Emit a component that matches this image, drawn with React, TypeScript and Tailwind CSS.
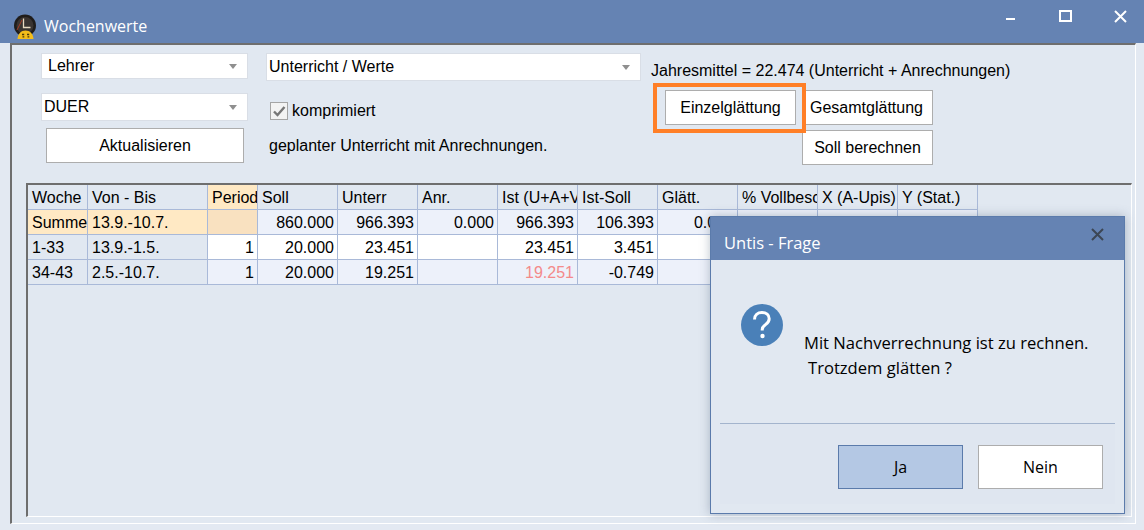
import React from 'react';

const sans = "font-['Liberation_Sans',Arial,sans-serif]";
const ui = "font-['Open_Sans','Noto_Sans',sans-serif]";
const gridCols = 'grid-cols-[60px_120px_50px_80px_80px_80px_80px_80px_80px_80px_80px_80px]';

const headers = ['Woche', 'Von - Bis', 'Periode', 'Soll', 'Unterr', 'Anr.', 'Ist (U+A+V', 'Ist-Soll', 'Glätt.', '% Vollbesch', 'X (A-Upis)', 'Y (Stat.)'];

const rows = [
  { cells: ['Summe', '13.9.-10.7.', '', '860.000', '966.393', '0.000', '966.393', '106.393', '0.000', '', '', ''], bg: 'bg-[#edf1fa]', first: 'bg-[#ffe9c4]', period: 'bg-[#f9e1c0]' },
  { cells: ['1-33', '13.9.-1.5.', '1', '20.000', '23.451', '', '23.451', '3.451', '', '', '', ''], bg: 'bg-white', first: 'bg-[#e1e8f1]', period: 'bg-white' },
  { cells: ['34-43', '2.5.-10.7.', '1', '20.000', '19.251', '', '19.251', '-0.749', '', '', '', ''], bg: 'bg-[#edf1fa]', first: 'bg-[#e1e8f1]', period: 'bg-[#edf1fa]' },
];

const Select = ({ label, className, textClass }: { label: string; className: string; textClass: string }) => (
  <div className={`flex items-center justify-between bg-white border border-[#d9dee6] text-[16px] text-black ${className}`}>
    <span className={textClass}>{label}</span>
    <svg width="8" height="5" viewBox="0 0 8 5" className="mr-[10px]">
      <path d="M0 0h8L4 5z" fill="#8f8f8f" />
    </svg>
  </div>
);

const Btn = ({ label, className }: { label: string; className: string }) => (
  <button className={`bg-white border border-[#adadad] text-[16px] text-black flex items-center justify-center ${className}`}>
    {label}
  </button>
);

const Logo = () => (
  <svg width="24" height="26" viewBox="0 0 24 26" className="shrink-0 mt-[10px]">
    <circle cx="12" cy="11.500" r="11" fill="#1f1c1a" />
    <circle cx="12" cy="11.500" r="8.500" fill="#3a3431" />
    <path d="M10.500 4.500v9h7" stroke="#e8d9c0" strokeWidth="1.300" fill="none" />
    <path d="M4 16l5-10" stroke="#a33c26" strokeWidth="1" />
    <path d="M4.500 25c.5-5.500 3.500-8.500 8-8.500s7.500 3 8 8.500z" fill="#f3bd1a" />
    <path d="M9 20.500h2.200M14 20.500h2.200M9.500 22.800h1.800M14.500 22.800h1.800" stroke="#4a3a08" strokeWidth="1.300" />
  </svg>
);

export default function App() {
  return (
    <div className={`relative w-[1144px] h-[530px] overflow-hidden bg-[#e3e9f2] ${sans}`}>
      {/* Title bar */}
      <div className="h-[43px] bg-[#6583b3] flex items-center pl-[13px] text-white">
        <Logo />
        <span className={`ml-[7px] mt-[9px] text-[16px] ${ui}`}>Wochenwerte</span>
        <div className="ml-auto flex items-start self-start">
          <div className="w-[9px] h-[2px] bg-white mt-[18px]" />
          <div className="w-[13px] h-[12px] border-2 border-white ml-[44px] mt-[10px]" />
          <svg width="13" height="13" viewBox="0 0 13 13" className="ml-[42px] mr-[17px] mt-[10px]">
            <path d="M1 1l11 11M12 1L1 12" stroke="white" strokeWidth="2" />
          </svg>
        </div>
      </div>

      {/* Main panel */}
      <div className="ml-[10px] w-[1126px] h-[481px] border-l-2 border-t-2 border-l-[#6e6e6e] border-t-[#6e6e6e] border-b border-r border-b-white border-r-white bg-[#e1e8f1] flex flex-col">
        <div className="flex h-[138px] pt-[8px] pl-[29px]">
          <div className="w-[207px] flex flex-col">
            <Select label="Lehrer" className="h-[26px]" textClass="ml-[6px]" />
            <Select label="DUER" className="h-[28px] mt-[14px]" textClass="ml-[2px]" />
            <Btn label="Aktualisieren" className="w-[198px] h-[35px] ml-[5px] mt-[7px]" />
          </div>
          <div className="w-[375px] ml-[18px] flex flex-col text-[16px] text-black">
            <Select label="Unterricht / Werte" className="h-[28px]" textClass="ml-[2px]" />
            <div className="flex items-center mt-[21px] ml-[4px] h-[17px]">
              <div className="w-[18px] h-[18px] border border-[#a5a5a5] bg-[#f3f3f3] flex items-center justify-center">
                <svg width="14" height="12" viewBox="0 0 14 12">
                  <path d="M2 6.500l3.500 3.500 7-8" stroke="#777" strokeWidth="2.400" fill="none" />
                </svg>
              </div>
              <span className="ml-[4px]">komprimiert</span>
            </div>
            <div className="mt-[17px] ml-[3px] leading-[20px]">geplanter Unterricht mit Anrechnungen.</div>
          </div>
          <div className="ml-[10px] flex flex-col text-[16px] text-black">
            <div className="mt-[8px] leading-[20px] whitespace-nowrap">Jahresmittel = 22.474 (Unterricht + Anrechnungen)</div>
            <div className="relative mt-[9px] ml-[14px] flex gap-[6px]">
              <Btn label="Einzelglättung" className="w-[131px] h-[35px]" />
              <Btn label="Gesamtglättung" className="w-[131px] h-[35px] pr-[2px]" />
              {/* Orange highlight */}
              <div className="absolute left-[-12px] top-[-7px] w-[153px] h-[50px] border-4 border-[#ff7f27] pointer-events-none" />
            </div>
            <Btn label="Soll berechnen" className="w-[131px] h-[35px] mt-[5px] ml-[151px]" />
          </div>
        </div>

        {/* Grid frame */}
        <div className="ml-[14px] w-[1106px] h-[334px] border-l-2 border-t-2 border-l-[#6e6e6e] border-t-[#6e6e6e] border-b border-r border-b-white border-r-white text-[16px] text-black">
          <div className={`grid ${gridCols} w-[950px]`}>
            {headers.map((h, i) => (
              <div
                key={h}
                className={`h-[25px] pl-[4px] leading-[25px] overflow-hidden whitespace-nowrap border-r border-b border-[#a9b9d8] ${i === 2 ? 'bg-[#ffe9c4]' : 'bg-[#e1e8f1]'}`}
              >
                {h}
              </div>
            ))}
            {rows.map((row) =>
              row.cells.map((c, i) => {
                const bg = i < 2 ? row.first : i === 2 ? row.period : row.bg;
                const red = c === '19.251' && i === 6;
                return (
                  <div
                    key={i}
                    className={`h-[25px] leading-[25px] overflow-hidden whitespace-nowrap border-r border-b border-[#a9b9d8] ${bg} ${i < 2 ? 'pl-[4px]' : 'pr-[3px] text-right'} ${red ? 'text-[#f48a8a]' : ''}`}
                  >
                    {c}
                  </div>
                );
              })
            )}
          </div>
        </div>
      </div>

      {/* Dialog */}
      <div className="absolute left-[710px] top-[216px] w-[415px] h-[298px] bg-[#e1e8f1] border border-[#5b7bab] shadow-[0_0_10px_rgba(60,80,110,0.35)] flex flex-col">
        <div className="h-[43px] bg-[#6583b3] flex items-start justify-between pl-[13px] pr-[20px] shrink-0">
          <span className={`mt-[15px] leading-[22px] text-[16.500px] text-white ${ui}`}>Untis - Frage</span>
          <svg width="13" height="13" viewBox="0 0 13 13" className="mt-[11px]">
            <path d="M1 1l11 11M12 1L1 12" stroke="#3c4654" strokeWidth="2" />
          </svg>
        </div>
        <div className={`flex-1 flex pl-[30px] pt-[46px] text-[16.600px] text-black ${ui}`}>
          <svg width="42" height="42" viewBox="0 0 42 42" className="shrink-0 -mt-[2px]">
            <circle cx="21" cy="21" r="21" fill="#4a80b8" />
            <path d="M13.500 15.500c0-4.300 3.200-7 7.400-7 4.300 0 7.300 2.600 7.300 6.200 0 2.900-1.700 4.400-3.700 5.900-2 1.500-3.300 2.600-3.300 5.100v.8" stroke="white" strokeWidth="3" fill="none" />
            <circle cx="21.500" cy="32" r="2.200" fill="white" />
          </svg>
          <div className="ml-[21px] mt-[24px] leading-[25px] whitespace-nowrap">
            <div>Mit Nachverrechnung ist zu rechnen.</div>
            <div className="ml-[4px]">Trotzdem glätten ?</div>
          </div>
        </div>
        <div className={`mx-[9px] mb-[9px] h-[81px] bg-[#dfe6f0] border-t border-[#a3b4cd] flex justify-end items-start pt-[21px] pr-[12px] gap-[15px] text-[16px] shrink-0 ${ui}`}>
          <button className="w-[125px] h-[44px] bg-[#b4c8e4] border border-[#5b7bab] text-black">Ja</button>
          <button className="w-[125px] h-[44px] bg-white border border-[#adadad] text-black">Nein</button>
        </div>
      </div>
    </div>
  );
}
